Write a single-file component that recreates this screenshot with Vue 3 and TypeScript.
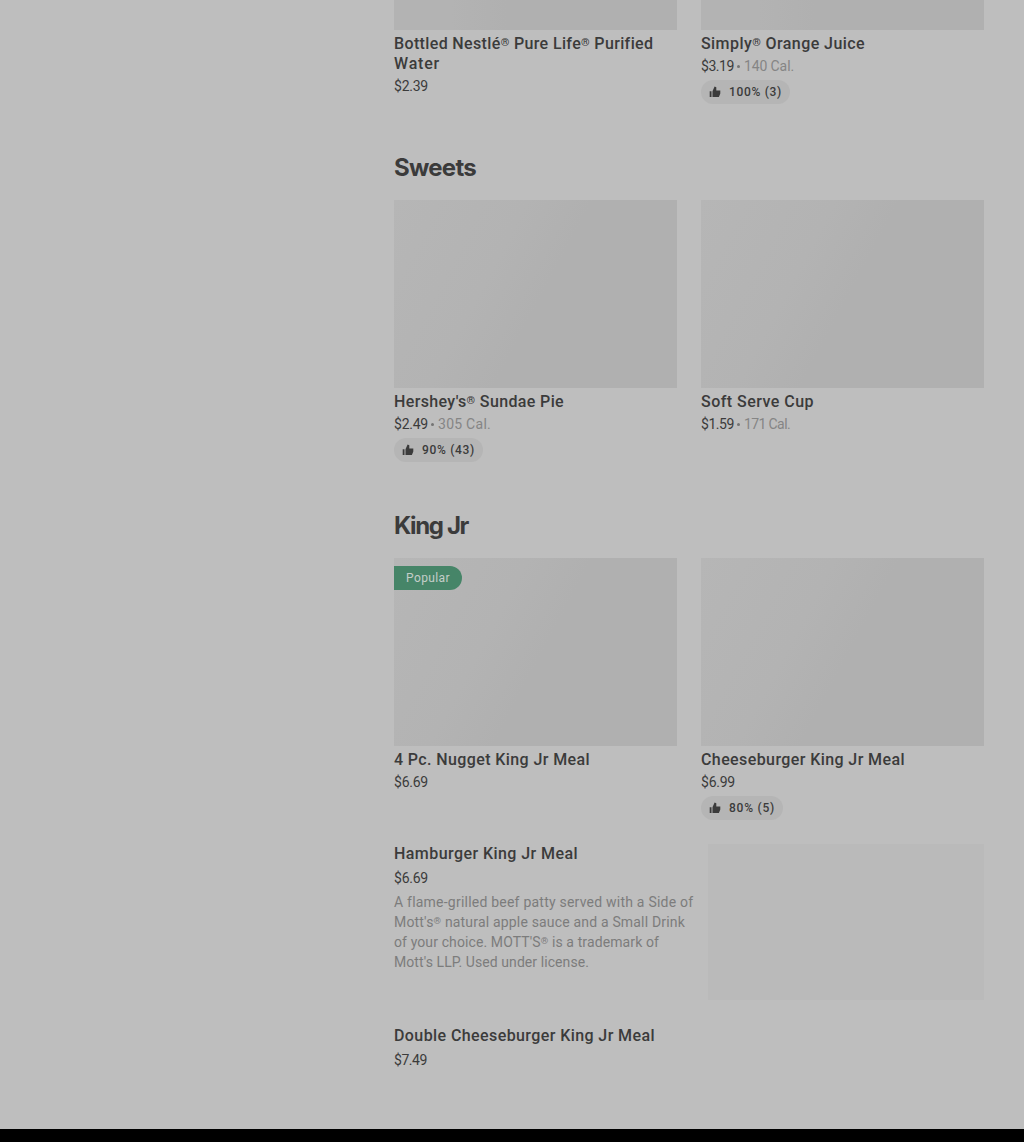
<script setup lang="ts">
import { h } from 'vue'
import type { Directive, FunctionalComponent } from 'vue'

interface Rating { label: string; w: number }
interface Item {
  title: [string, number][]
  price: string
  priceW: number
  cal?: string
  calW?: number
  rating?: Rating
  popular?: boolean
}

const drinks: Item[] = [
  { title: [['Bottled Nestlé® Pure Life® Purified', 259], ['Water', 46]], price: '$2.39', priceW: 34 },
  { title: [['Simply® Orange Juice', 164]], price: '$3.19', priceW: 33, cal: '140 Cal.', calW: 50, rating: { label: '100% (3)', w: 53 } },
]
const sweets: Item[] = [
  { title: [["Hershey's® Sundae Pie", 170]], price: '$2.49', priceW: 34, cal: '305 Cal.', calW: 53, rating: { label: '90% (43)', w: 53 } },
  { title: [['Soft Serve Cup', 113]], price: '$1.59', priceW: 33, cal: '171 Cal.', calW: 46 },
]
const kingJr: Item[] = [
  { title: [['4 Pc. Nugget King Jr Meal', 196]], price: '$6.69', priceW: 34, popular: true },
  { title: [['Cheeseburger King Jr Meal', 204]], price: '$6.99', priceW: 34, rating: { label: '80% (5)', w: 46 } },
]
const sections = [
  { name: '', w: 0, items: drinks },
  { name: 'Sweets', w: 82, items: sweets },
  { name: 'King Jr', w: 74, items: kingJr },
]
const description: [string, number][] = [
  ['A flame-grilled beef patty served with a Side of', 299],
  ["Mott's® natural apple sauce and a Small Drink", 291],
  ["of your choice. MOTT'S® is a trademark of", 265],
  ["Mott's LLP. Used under license.", 195],
]

// Text with its registered marks set small and raised.
const Marked: FunctionalComponent<{ text: string }> = ({ text }) =>
  h('span', { class: 'line' }, text.split(/(®)/).map((part) => (part === '®' ? h('span', { class: 'reg' }, part) : part)))
Marked.props = ['text']

// Tracks a line of text so that it sets to the given width.
const vTrack: Directive<HTMLElement, number> = {
  mounted(el, { value }) {
    const n = (el.textContent ?? '').length
    el.style.letterSpacing = `${(value - el.getBoundingClientRect().width) / n}px`
  },
}
</script>

<template>
  <div class="page">
    <main class="menu">
      <section v-for="(s, i) in sections" :key="i" class="section">
        <h2 v-if="s.name"><span v-track="s.w" class="line">{{ s.name }}</span></h2>
        <div class="grid">
          <article v-for="item in s.items" :key="item.price" class="card">
            <div class="photo"><span v-if="item.popular" class="popular"><span v-track="44" class="line">Popular</span></span></div>
            <h3><div v-for="t in item.title" :key="t[0]"><Marked v-track="t[1]" :text="t[0]" /></div></h3>
            <div class="price">
              <span v-track="item.priceW" class="line">{{ item.price }}</span>
              <template v-if="item.cal"><i class="dot"></i><span v-track="item.calW!" class="line cal">{{ item.cal }}</span></template>
            </div>
            <div v-if="item.rating" class="rating">
              <svg width="12" height="12" viewBox="0 0 12 12" fill="currentColor"><path d="M0.7 5.2H2.5V11H0.7zM3.5 11V5.2L5.6 0.5L7.3 1.2V4.5H11.3V7.5L9.9 11z" /></svg>
              <span v-track="item.rating.w" class="line">{{ item.rating.label }}</span>
            </div>
          </article>
        </div>
      </section>
      <article class="row">
        <div class="info">
          <h3><span v-track="184" class="line">Hamburger King Jr Meal</span></h3>
          <div class="price"><span v-track="34" class="line">$6.69</span></div>
          <p><span v-for="d in description" :key="d[0]" class="desc"><Marked v-track="d[1]" :text="d[0]" /></span></p>
        </div>
        <div class="thumb"></div>
      </article>
      <article class="row last">
        <div class="info">
          <h3><span v-track="261" class="line">Double Cheeseburger King Jr Meal</span></h3>
          <div class="price"><span v-track="33" class="line">$7.49</span></div>
        </div>
      </article>
    </main>
    <footer></footer>
  </div>
</template>

<style>
body { margin: 0; background: #bebebe; }
.line { display: inline-block; white-space: nowrap; }
.reg { font-size: 0.68em; line-height: 0; vertical-align: 0.3em; }
</style>
<style scoped>
.page {
  height: 1142px; display: flex; flex-direction: column; overflow: hidden;
  background: #bebebe; color: #3b3b3b; font-family: Roboto, "Liberation Sans", sans-serif;
}
.menu { flex: 1; margin: 0 40px 0 394px; min-height: 0; }
footer { height: 13px; background: #000; }
.section + .section { padding-top: 48px; }
h2 { margin: 0 0 16px; font: 650 24px/32px Inter, sans-serif; height: 32px; }
.grid { display: grid; grid-template-columns: 283px 283px; column-gap: 24px; }
.photo { height: 188px; box-sizing: border-box; padding-top: 8px; background: linear-gradient(118deg, #b6b6b6, #b3b3b3 35%, #b0b0b0 52%, #b0b0b0); }
.section:first-child .photo { height: 30px; background: linear-gradient(90deg, #b3b3b3 20%, #b0b0b0 40%, #b0b0b0); }
.popular { display: flex; width: 68px; height: 24px; box-sizing: border-box; padding-left: 12px; background: #468568; border-radius: 0 12px 12px 0; color: #c4cec8; font-size: 12px; line-height: 24px; }
h3 { margin: 0; font-size: 16px; line-height: 20px; font-weight: 500; }
.card h3 { padding-top: 4px; }
h3 > div { height: 20px; }
.price { display: flex; align-items: center; height: 20px; font-size: 14px; line-height: 20px; }
.card .price { margin-top: 2px; }
.dot { width: 3px; height: 3px; border-radius: 50%; background: #747474; margin: 1px 4px 0 3px; }
.cal { color: #858585; }
.rating { display: inline-flex; align-items: center; height: 24px; margin-top: 4px; padding: 0 8px; gap: 8px; border-radius: 12px; background: #b5b5b5; font-size: 12px; line-height: 24px; font-weight: 500; vertical-align: top; }
.row { display: flex; justify-content: space-between; height: 156px; margin-top: 24px; }
.row .price { margin-top: 4px; }
.info { width: 300px; }
p { margin: 4px 0 0; font-size: 14px; line-height: 20px; color: #7c7c7c; }
.desc { display: block; height: 20px; }
.thumb { width: 276px; background: #bababa; }
.last { margin-top: 26px; height: 60px; }
</style>
